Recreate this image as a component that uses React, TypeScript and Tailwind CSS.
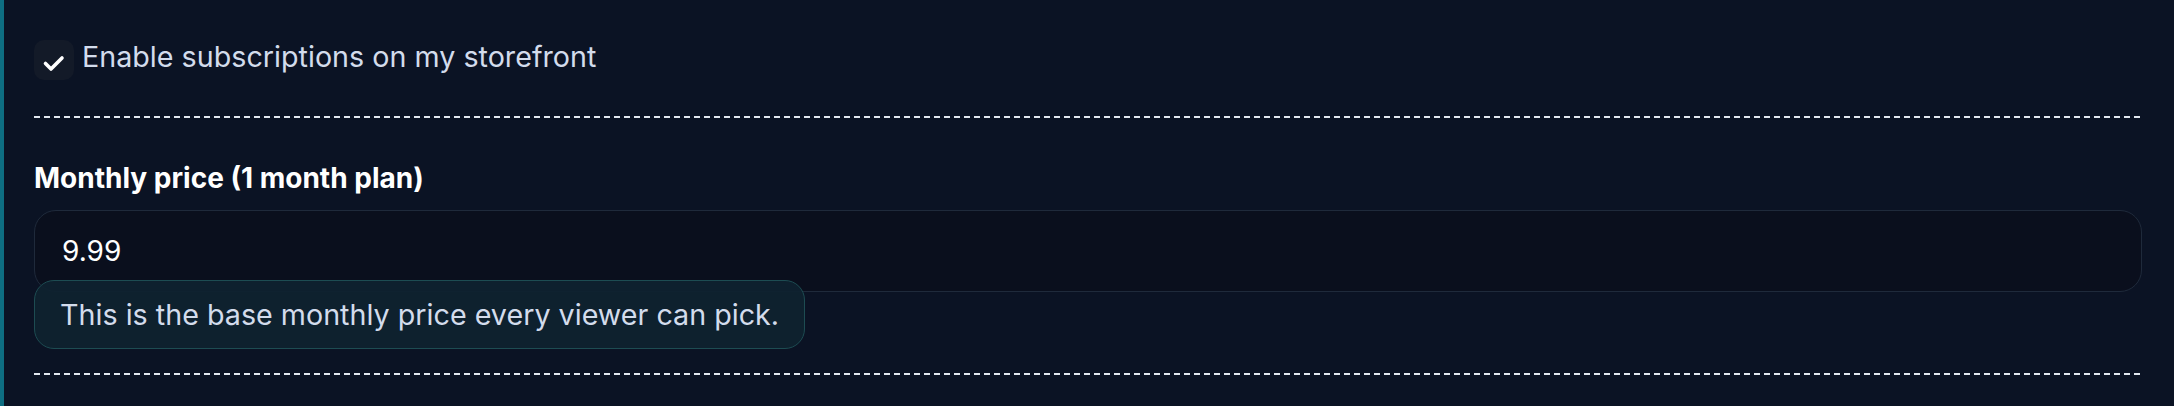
const dashed =
  "h-[2px] w-full bg-[repeating-linear-gradient(to_right,#e2e8f0_0px,#e2e8f0_6px,transparent_6px,transparent_10px)]";

export default function App() {
  return (
    <div className="min-h-[406px] w-full bg-[#0b1324] border-l-4 border-[#0e6e82] font-['Inter',sans-serif]">
      <div className="pl-[30px] pr-[32px] pt-10">
        {/* Enable toggle */}
        <label className="flex items-start gap-2">
          <span className="flex h-10 w-10 shrink-0 items-center justify-center rounded-[10px] bg-[#131a28]">
            <svg viewBox="0 0 24 24" className="mt-[6px] h-[24px] w-[24px]" fill="none" stroke="white" strokeWidth={3.6} strokeLinecap="round" strokeLinejoin="round">
              <path d="M3.5 12.5l5.5 5.5 11-11" />
            </svg>
          </span>
          <span className="text-[28.7px] leading-[34px] text-[#d3dcec]">Enable subscriptions on my storefront</span>
        </label>

        <div className={`mt-9 ${dashed}`} />

        {/* Monthly price */}
        <div className="pt-[43px]">
          <div className="text-[28px] font-bold leading-[34px] text-white">Monthly price (1 month plan)</div>
          <div className="mt-[15px] flex h-[82px] items-center rounded-[22px] border border-[#1f2a3b] bg-[#0a0f1d] px-[27px]">
            <span className="text-[28px] text-white">9.99</span>
          </div>
          <div className="relative z-10 -mt-3 inline-flex h-[69px] items-center rounded-[20px] border border-[#1d4c52] bg-[#0f222f]/95 px-[25px]">
            <span className="text-[28.7px] text-[#d3dcec]">This is the base monthly price every viewer can pick.</span>
          </div>
        </div>

        <div className={`mt-[24px] ${dashed}`} />
      </div>
    </div>
  );
}
